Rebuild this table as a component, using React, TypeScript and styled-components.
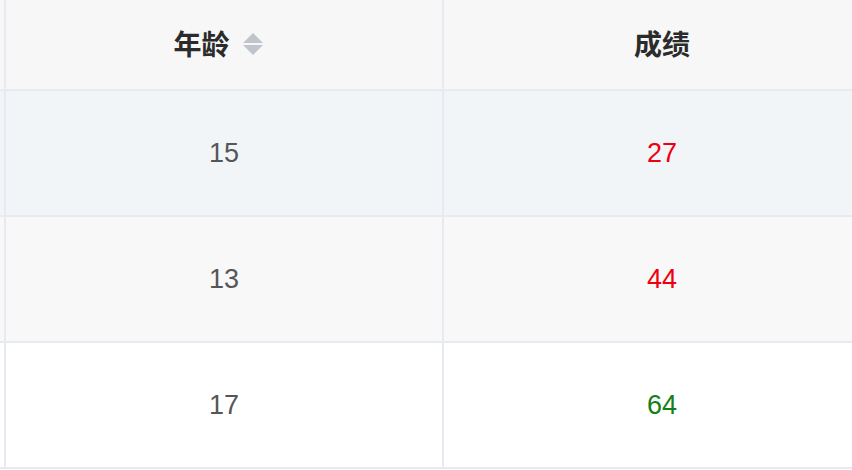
import styled, { createGlobalStyle } from "styled-components";

const GlobalStyle = createGlobalStyle`
  html, body {
    margin: 0;
    padding: 0;
    background: #ffffff;
    overflow: hidden;
  }
  body {
    font-family: "Helvetica Neue", "Liberation Sans", "Noto Sans CJK SC", sans-serif;
  }
`;

const Table = styled.div`
  display: flex;
  flex-direction: column;
  width: 882px;
`;

const Row = styled.div<{ $bg: string; $height: number }>`
  display: grid;
  grid-template-columns: 6px 438px 438px;
  height: ${(p) => p.$height}px;
  background: ${(p) => p.$bg};
  border-bottom: 2px solid #e8eaf1;
`;

const Cell = styled.div`
  display: flex;
  align-items: center;
  justify-content: center;
  border-right: 2px solid #e8eaf1;
  font-size: 27px;
  color: #555659;
`;

const HeadCell = styled(Cell)`
  font-family: "Noto Sans CJK SC", sans-serif;
  font-weight: 700;
  color: #2b2b2b;
  font-size: 28px;
  padding-bottom: 3px;
`;

const Label = styled.span`
  line-height: 1;
`;

const Caret = styled.span`
  display: inline-flex;
  flex-direction: column;
  gap: 2px;
  margin-left: 13px;
  margin-right: 12px;
  margin-top: 2px;
`;

const Tri = styled.span<{ $up?: boolean }>`
  width: 0;
  height: 0;
  border-left: 10px solid transparent;
  border-right: 10px solid transparent;
  ${(p) =>
    p.$up
      ? "border-bottom: 10px solid #c0c4cc;"
      : "border-top: 10px solid #c0c4cc;"}
`;

const Score = styled.span<{ $pass: boolean }>`
  color: ${(p) => (p.$pass ? "#138013" : "#f0000f")};
`;

const rows = [
  { age: 15, score: 27, bg: "#f2f5f8" },
  { age: 13, score: 44, bg: "#f8f8f8" },
  { age: 17, score: 64, bg: "#ffffff" },
];

export default function App() {
  return (
    <>
      <GlobalStyle />
      <Table>
        <Row $bg="#f7f7f7" $height={89}>
          <HeadCell />
          <HeadCell>
            <Label>年龄</Label>
            <Caret>
              <Tri $up />
              <Tri />
            </Caret>
          </HeadCell>
          <HeadCell>
            <Label>成绩</Label>
          </HeadCell>
        </Row>
        {rows.map((r) => (
          <Row key={r.age} $bg={r.bg} $height={124}>
            <Cell />
            <Cell>{r.age}</Cell>
            <Cell>
              <Score $pass={r.score >= 60}>{r.score}</Score>
            </Cell>
          </Row>
        ))}
      </Table>
    </>
  );
}
